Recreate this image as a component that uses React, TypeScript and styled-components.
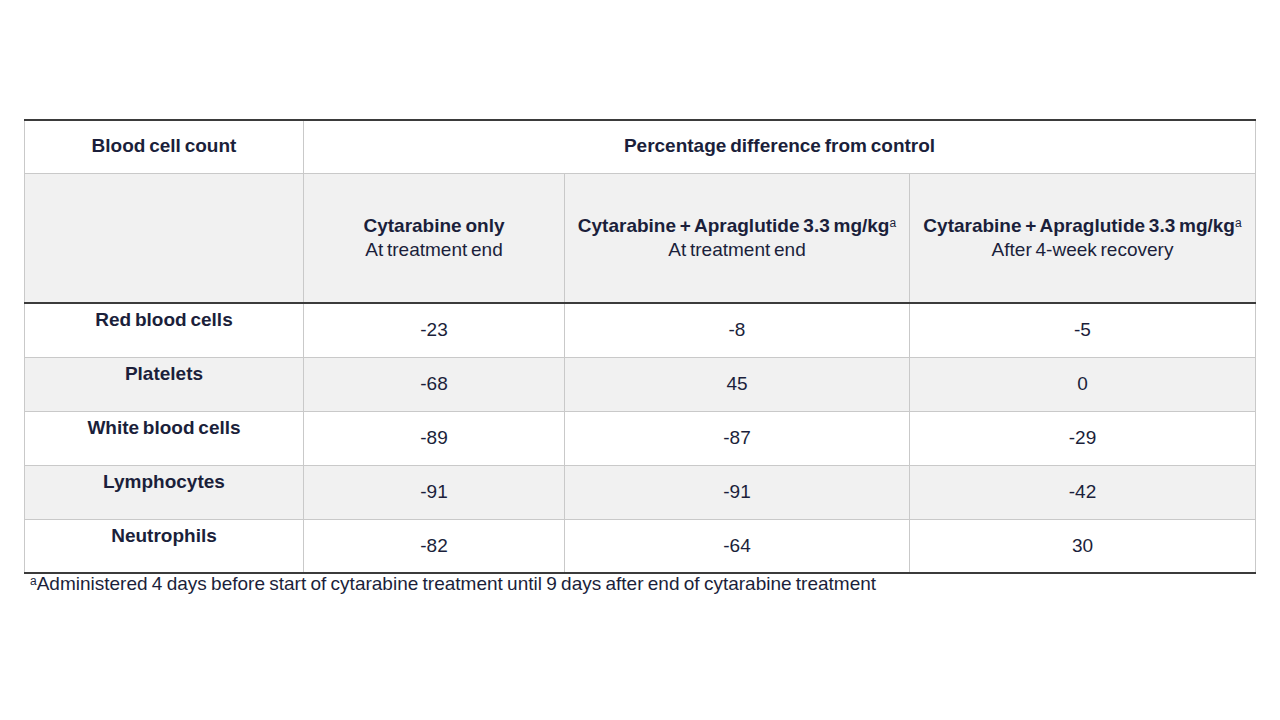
import React from "react";
import styled, { createGlobalStyle } from "styled-components";

type Row = {
  label: string;
  values: string[];
};

const ROWS: Row[] = [
  { label: "Red blood cells", values: ["-23", "-8", "-5"] },
  { label: "Platelets", values: ["-68", "45", "0"] },
  { label: "White blood cells", values: ["-89", "-87", "-29"] },
  { label: "Lymphocytes", values: ["-91", "-91", "-42"] },
  { label: "Neutrophils", values: ["-82", "-64", "30"] },
];

export default function App() {
  return (
    <Page>
      <GlobalStyle />
      <Table>
        <colgroup>
          <col style={{ width: 279 }} />
          <col style={{ width: 261 }} />
          <col style={{ width: 345 }} />
          <col style={{ width: 346 }} />
        </colgroup>
        <thead>
          <TitleRow>
            <HeadCell>Blood cell count</HeadCell>
            <HeadCell colSpan={3}>Percentage difference from control</HeadCell>
          </TitleRow>
          <GroupRow>
            <GroupCell />
            <GroupCell>
              <b>Cytarabine only</b>
              <br />
              At treatment end
            </GroupCell>
            <GroupCell>
              <b>
                Cytarabine + Apraglutide 3.3 mg/kg<Sup>a</Sup>
              </b>
              <br />
              At treatment end
            </GroupCell>
            <GroupCell>
              <b>
                Cytarabine + Apraglutide 3.3 mg/kg<Sup>a</Sup>
              </b>
              <br />
              After 4-week recovery
            </GroupCell>
          </GroupRow>
        </thead>
        <tbody>
          {ROWS.map((row, i) => (
            <DataRow key={row.label} $shaded={i % 2 === 1} $last={i === ROWS.length - 1}>
              <LabelCell>{row.label}</LabelCell>
              {row.values.map((v, j) => (
                <ValueCell key={j}>{v}</ValueCell>
              ))}
            </DataRow>
          ))}
        </tbody>
      </Table>
      <Footnote>
        <Sup>a</Sup>Administered 4 days before start of cytarabine treatment until 9 days after end of cytarabine treatment
      </Footnote>
    </Page>
  );
}

const GlobalStyle = createGlobalStyle`
  body {
    margin: 0;
    background: #ffffff;
    font-family: "Liberation Sans", Arial, sans-serif;
    color: #1b1f3b;
  }
`;

const Page = styled.div`
  width: 1280px;
  height: 720px;
  padding: 119px 0 0 24px;
  box-sizing: border-box;
`;

const Table = styled.table`
  width: 1232px;
  border-collapse: collapse;
  table-layout: fixed;
  border-top: 2px solid #3b3b3b;
  font-size: 19px;
  word-spacing: -1.5px;
`;

const TitleRow = styled.tr`
  height: 53px;
  background: #ffffff;
  border-bottom: 1px solid #c9c9c9;
`;

const HeadCell = styled.th`
  padding: 0 0 1px;
  font-weight: bold;
  text-align: center;
  vertical-align: middle;
  border-left: 1px solid #c9c9c9;
  border-right: 1px solid #c9c9c9;
`;

const GroupRow = styled.tr`
  height: 130px;
  background: #f1f1f1;
  border-bottom: 2px solid #3b3b3b;
`;

const GroupCell = styled.th`
  padding: 0;
  font-weight: normal;
  line-height: 24px;
  text-align: center;
  vertical-align: middle;
  border-left: 1px solid #c9c9c9;
  border-right: 1px solid #c9c9c9;
`;

const DataRow = styled.tr<{ $shaded: boolean; $last: boolean }>`
  height: 54px;
  background: ${(p) => (p.$shaded ? "#f1f1f1" : "#ffffff")};
  border-bottom: ${(p) => (p.$last ? "2px solid #3b3b3b" : "1px solid #c9c9c9")};
`;

const LabelCell = styled.td`
  padding: 5px 0 0;
  font-weight: bold;
  text-align: center;
  vertical-align: top;
  border-left: 1px solid #c9c9c9;
  border-right: 1px solid #c9c9c9;
`;

const ValueCell = styled.td`
  padding: 0;
  text-align: center;
  vertical-align: middle;
  border-left: 1px solid #c9c9c9;
  border-right: 1px solid #c9c9c9;
`;

const Sup = styled.sup`
  font-size: 12px;
  font-weight: normal;
  line-height: 0;
  vertical-align: 0.45em;
`;

const Footnote = styled.p`
  margin: -1px 0 0 6px;
  font-size: 19px;
  word-spacing: -1px;
  line-height: 22px;
`;
